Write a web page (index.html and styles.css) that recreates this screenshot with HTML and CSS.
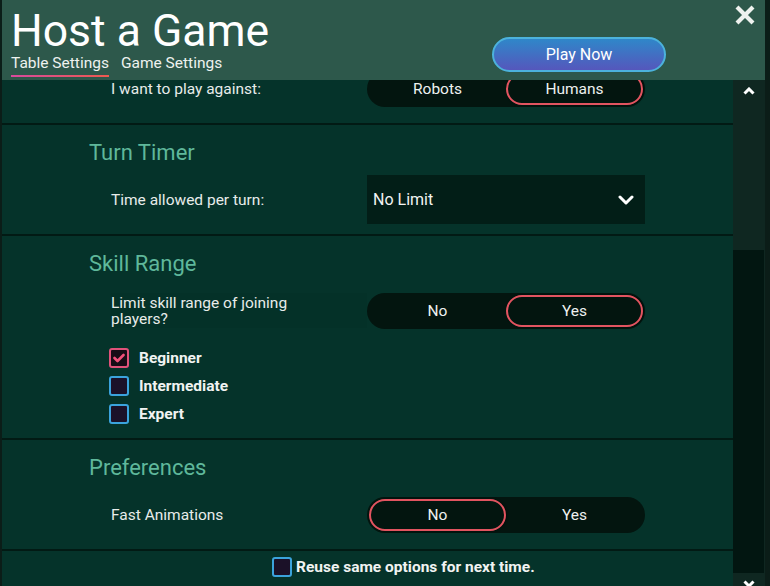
FILE: index.html
```html
<!DOCTYPE html>
<html>
<head>
<meta charset="utf-8">
<link rel="stylesheet" href="styles.css">
</head>
<body>
<div class="app">
  <header class="top">
    <div class="title-block">
      <h1 class="title">Host a Game</h1>
      <nav class="tabs">
        <span class="tab active">Table Settings</span>
        <span class="tab">Game Settings</span>
      </nav>
    </div>
    <button class="play">Play Now</button>
    <button class="close" aria-label="Close">
      <svg width="22" height="20" viewBox="0 0 22 20"><path d="M3 2 L19 18 M19 2 L3 18" stroke="#eef2ef" stroke-width="4.2" stroke-linecap="butt" fill="none"/></svg>
    </button>
  </header>
  <div class="main">
    <div class="scroll">
      <div class="scroll-inner">
        <section class="section first">
          <div class="row">
            <div class="label">I want to play against:</div>
            <div class="toggle">
              <span class="opt">Robots</span>
              <span class="opt on">Humans</span>
            </div>
          </div>
        </section>
        <section class="section">
          <h2 class="heading">Turn Timer</h2>
          <div class="row">
            <div class="label">Time allowed per turn:</div>
            <div class="select">
              <span>No Limit</span>
              <svg width="16" height="10" viewBox="0 0 16 10"><path d="M2 2 L8 8 L14 2" stroke="#ffffff" stroke-width="3" fill="none" stroke-linecap="round" stroke-linejoin="round"/></svg>
            </div>
          </div>
        </section>
        <section class="section">
          <h2 class="heading">Skill Range</h2>
          <div class="row">
            <div class="label shaded">Limit skill range of joining players?</div>
            <div class="toggle">
              <span class="opt">No</span>
              <span class="opt on">Yes</span>
            </div>
          </div>
          <div class="checks">
            <label class="check"><span class="box checked"><svg width="12" height="10" viewBox="0 0 12 10"><path d="M1.5 5 L4.5 8 L10.5 2" stroke="#f0507a" stroke-width="2.6" fill="none" stroke-linecap="round" stroke-linejoin="round"/></svg></span>Beginner</label>
            <label class="check"><span class="box"></span>Intermediate</label>
            <label class="check"><span class="box"></span>Expert</label>
          </div>
        </section>
        <section class="section">
          <h2 class="heading">Preferences</h2>
          <div class="row">
            <div class="label">Fast Animations</div>
            <div class="toggle">
              <span class="opt on">No</span>
              <span class="opt">Yes</span>
            </div>
          </div>
        </section>
        <div class="footer">
          <label class="check footer-check"><span class="box"></span>Reuse same options for next time.</label>
        </div>
      </div>
    </div>
    <div class="scrollbar">
      <div class="sb-btn">
        <svg width="12" height="8" viewBox="0 0 12 8"><path d="M1.5 6.5 L6 2 L10.5 6.5" stroke="#ffffff" stroke-width="3" fill="none"/></svg>
      </div>
      <div class="sb-track"><div class="sb-thumb"></div></div>
      <div class="sb-btn">
        <svg width="12" height="8" viewBox="0 0 12 8"><path d="M1.5 1.5 L6 6 L10.5 1.5" stroke="#ffffff" stroke-width="3" fill="none"/></svg>
      </div>
    </div>
  </div>
</div>
</body>
</html>
```

FILE: styles.css
```css
* { box-sizing: border-box; }
html, body {
  margin: 0;
  padding: 0;
  background: #0b1d18;
  overflow: hidden;
}
body {
  font-family: Roboto, "Liberation Sans", sans-serif;
  color: #e8ecea;
}
.app {
  margin-left: 2px;
  width: 763px;
  height: 586px;
  display: flex;
  flex-direction: column;
  overflow: hidden;
}
.top {
  height: 80px;
  flex: none;
  background: #2d584b;
  display: flex;
  align-items: flex-start;
  padding: 8px 9px 0 9px;
}
.title-block {
  flex: 1;
}
.title {
  margin: 0;
  font-weight: 400;
  font-size: 44.5px;
  line-height: 46px;
  color: #ffffff;
}
.tabs {
  display: flex;
  gap: 12px;
  font-size: 15.5px;
  line-height: 18px;
  color: #eef2ef;
}
.tab {
  padding-bottom: 3px;
  border-bottom: 2px solid transparent;
}
.tab.active {
  border-image: linear-gradient(90deg, #d84a9e, #ee5a4e) 1;
}
.play {
  margin-top: 29px;
  margin-right: 68px;
  width: 174px;
  height: 35px;
  border-radius: 18px;
  border: 2px solid #4cb2dc;
  background: linear-gradient(180deg, #2f87c9 0%, #5557bc 100%);
  color: #ffffff;
  font-family: Roboto, "Liberation Sans", sans-serif;
  font-size: 16px;
  padding: 0;
}
.close {
  margin-top: -3px;
  width: 22px;
  height: 20px;
  padding: 0;
  border: 0;
  background: none;
  display: flex;
}
.main {
  flex: 1;
  display: flex;
  min-height: 0;
}
.scroll {
  width: 731px;
  overflow: hidden;
  background: #05332a;
}
.scroll-inner {
  margin-top: -16px;
}
.section {
  padding: 15px 0 10px 0;
  border-bottom: 2px solid #021a14;
}
.section.first {
  padding-top: 0;
}
.heading {
  margin: 0 0 9px 87px;
  font-size: 22px;
  line-height: 26px;
  font-weight: 400;
  color: #5fb89b;
}
.row {
  height: 49px;
  display: flex;
  align-items: center;
  padding-left: 109px;
}
.label {
  width: 256px;
  font-size: 15.5px;
  line-height: 16px;
  padding-right: 28px;
}
.label.shaded {
  align-self: stretch;
  display: flex;
  align-items: center;
  margin: 7px 0;
  background: rgba(0, 0, 0, 0.04);
}
.select {
  width: 278px;
  height: 49px;
  background: #021e17;
  display: flex;
  align-items: center;
  justify-content: space-between;
  padding: 0 11px 0 6px;
  font-size: 16px;
  color: #f2f4f3;
}
.toggle {
  width: 278px;
  height: 36px;
  border-radius: 18px;
  background: #03150f;
  display: flex;
  padding: 2px;
}
.opt {
  flex: 1;
  display: flex;
  align-items: center;
  justify-content: center;
  font-size: 15.5px;
  border-radius: 16px;
  border: 2px solid transparent;
  color: #eef1ef;
}
.opt.on {
  border-color: #e25460;
  box-shadow: 1px 0 2px rgba(0, 0, 0, 0.5);
}
.checks {
  padding: 9px 0 0 107px;
}
.check {
  height: 28px;
  display: flex;
  align-items: center;
  gap: 10px;
  font-size: 15.5px;
  font-weight: 700;
  color: #f1f3f2;
}
.box {
  width: 20px;
  height: 20px;
  border: 2px solid #3ba3dc;
  border-radius: 3px;
  background: #1b1128;
  display: flex;
  align-items: center;
  justify-content: center;
  flex: none;
}
.box.checked {
  border-color: #e0527a;
  background: #170c16;
}
.footer {
  height: 32px;
  display: flex;
  align-items: center;
  padding-left: 270px;
}
.footer-check {
  gap: 4px;
}
.scrollbar {
  width: 32px;
  background: #0f2721;
  display: flex;
  flex-direction: column;
}
.sb-btn {
  height: 22px;
  flex: none;
  display: flex;
  align-items: center;
  justify-content: center;
}
.sb-track {
  flex: none;
  height: 471px;
  padding-top: 148px;
}
.sb-thumb {
  width: 31px;
  height: 323px;
  background: #021611;
}
```
